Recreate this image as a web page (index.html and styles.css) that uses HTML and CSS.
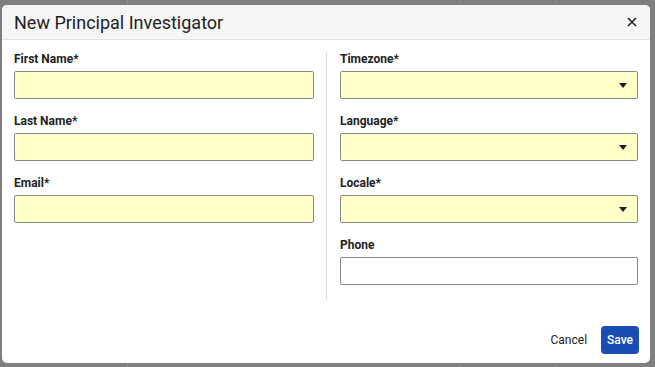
FILE: index.html
```html
<!DOCTYPE html>
<html lang="en">
<head>
    <meta charset="UTF-8">
    <meta name="viewport" content="width=device-width, initial-scale=1.0">
    <title>New Principal Investigator</title>
    <link rel="stylesheet" href="styles.css">
</head>
<body>

    <!-- modal dialog -->
    <div class="modal">
        <div class="modal-header">
            <h2>New Principal Investigator</h2>
            <button class="close-button" aria-label="Close">
                <svg width="10" height="10" viewBox="0 0 10 10">
                    <path d="M1 1L9 9M9 1L1 9" stroke="#222" stroke-width="1.6" fill="none"/>
                </svg>
            </button>
        </div>

        <div class="modal-body">
            <div class="column">
                <div class="field">
                    <label>First Name*</label>
                    <input class="input required" type="text">
                </div>
                <div class="field">
                    <label>Last Name*</label>
                    <input class="input required" type="text">
                </div>
                <div class="field">
                    <label>Email*</label>
                    <input class="input required" type="text">
                </div>
            </div>

            <div class="divider"></div>

            <div class="column">
                <div class="field">
                    <label>Timezone*</label>
                    <div class="input required select"><span class="caret"></span></div>
                </div>
                <div class="field">
                    <label>Language*</label>
                    <div class="input required select"><span class="caret"></span></div>
                </div>
                <div class="field">
                    <label>Locale*</label>
                    <div class="input required select"><span class="caret"></span></div>
                </div>
                <div class="field">
                    <label>Phone</label>
                    <input class="input" type="text">
                </div>
            </div>
        </div>

        <div class="modal-footer">
            <button class="cancel-button">Cancel</button>
            <button class="save-button">Save</button>
        </div>
    </div>

</body>
</html>
```

FILE: styles.css
```css
body {
    margin: 0;
    height: 367px;
    overflow: hidden;
    font-family: Roboto, "Liberation Sans", Arial, sans-serif;
    color: #222;
    background-color: #7f7f7f;
    /* faint lines of the page behind the overlay */
    background-image:
        linear-gradient(90deg, transparent 127px, #8c8c8c 127px, #8c8c8c 128px, transparent 128px),
        linear-gradient(90deg, transparent 460px, #8c8c8c 460px, #8c8c8c 461px, transparent 461px),
        linear-gradient(90deg, transparent 555px, #8c8c8c 555px, #8c8c8c 556px, transparent 556px);
}

/* modal */
.modal {
    margin: 5px 0 0 2px;
    width: 648px;
    height: 358px;
    background-color: #fff;
    border-radius: 5px;
    display: flex;
    flex-direction: column;
    overflow: hidden;
}

.modal-header {
    height: 35px;
    box-sizing: border-box;
    padding: 0 13px 0 12px;
    background-color: #f6f6f6;
    border-bottom: 1px solid #e2e2e2;
    display: flex;
    align-items: center;
    justify-content: space-between;
}

.modal-header h2 {
    margin: 0;
    font-size: 18px;
    font-weight: 400;
    color: #222;
}

.close-button {
    border: none;
    background: none;
    padding: 0;
    width: 10px;
    height: 10px;
    display: flex;
    cursor: pointer;
}

.modal-body {
    padding: 12px 12px 0;
    display: flex;
}

.column {
    width: 300px;
}

.column:last-child {
    width: 298px;
}

.divider {
    width: 1px;
    margin: 0 13px 0 12px;
    background-color: #dcdcdc;
}

.field {
    display: flex;
    flex-direction: column;
    margin-bottom: 15px;
}

.field label {
    font-size: 12px;
    font-weight: 700;
    line-height: 15px;
    margin-bottom: 4px;
    color: #222;
}

.input {
    box-sizing: border-box;
    height: 28px;
    width: 100%;
    margin: 0;
    border: 1px solid #8a8a8a;
    border-radius: 2px;
    background-color: #fff;
    font: inherit;
}

.input.required {
    background-color: #ffffc8;
}

.select {
    display: flex;
    align-items: center;
    justify-content: flex-end;
    padding-right: 10px;
}

.caret {
    width: 0;
    height: 0;
    border-left: 4px solid transparent;
    border-right: 4px solid transparent;
    border-top: 5px solid #1e1e1e;
}

/* footer */
.modal-footer {
    margin-top: auto;
    padding: 0 11px 9px;
    display: flex;
    justify-content: flex-end;
    align-items: center;
    gap: 6px;
}

.cancel-button {
    height: 28px;
    padding: 0 8px;
    border: none;
    background: none;
    font-family: inherit;
    font-size: 12px;
    color: #222;
    cursor: pointer;
}

.save-button {
    height: 28px;
    padding: 0 6px;
    border: none;
    border-radius: 4px;
    background-color: #1a4db3;
    color: #fff;
    font-family: inherit;
    font-size: 12px;
    font-weight: 500;
    cursor: pointer;
}
```
